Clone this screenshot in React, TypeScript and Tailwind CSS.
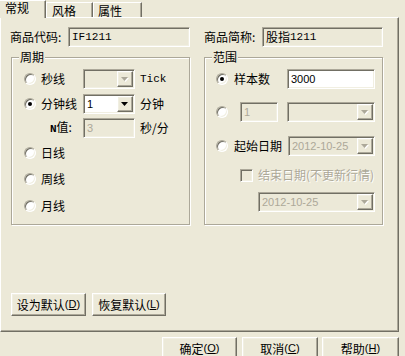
import React from "react";

const sunken =
  "border border-t-[#ACA899] border-l-[#ACA899] border-r-white border-b-white shadow-[inset_1px_1px_0_#716F64,inset_-1px_-1px_0_#F1EFE2]";
const raised =
  "border border-t-white border-l-white border-r-[#716F64] border-b-[#716F64] shadow-[inset_-1px_-1px_0_#ACA899,inset_1px_1px_0_#F1EFE2]";
const mono = "font-['Liberation_Mono',monospace] text-[11px]";
const sans = "font-['Liberation_Sans',sans-serif] text-[11px]";
const grayText = "text-[#ACA899]";
const emboss = "text-[#ACA899] [text-shadow:1px_1px_0_#fff]";

function Arrow({ disabled }: { disabled?: boolean }) {
  return (
    <svg width="8" height="5" viewBox="0 0 8 5" className="overflow-visible">
      {disabled && <polygon points="1,1 8,1 4.5,5" fill="#fff" />}
      <polygon points="0,0 7,0 3.5,4" fill={disabled ? "#ACA899" : "#000"} />
    </svg>
  );
}

function Combo({
  className,
  value,
  disabled,
}: {
  className: string;
  value?: string;
  disabled?: boolean;
}) {
  return (
    <div
      className={`flex h-[20px] p-[1px] ${sunken} ${disabled ? "bg-[#ECE9D8]" : "bg-white"} ${className}`}
    >
      <div
        className={`flex-1 flex items-center pl-[2px] ${sans} ${disabled ? grayText : "text-black"}`}
      >
        {value}
      </div>
      <div
        className={`w-[16px] h-full bg-[#ECE9D8] flex items-center justify-center ${raised}`}
      >
        <Arrow disabled={disabled} />
      </div>
    </div>
  );
}

function TextBox({
  className,
  children,
  disabled,
  white,
}: {
  className: string;
  children?: React.ReactNode;
  disabled?: boolean;
  white?: boolean;
}) {
  return (
    <div
      className={`h-[20px] flex items-center pl-[3px] ${sunken} ${white ? "bg-white" : "bg-[#ECE9D8]"} ${disabled ? grayText : "text-black"} ${className}`}
    >
      {children}
    </div>
  );
}

function Radio({ checked }: { checked?: boolean }) {
  return (
    <div className="w-[12px] h-[12px] shrink-0 rounded-full bg-white border border-t-[#ACA899] border-l-[#ACA899] border-r-white border-b-white shadow-[inset_1px_1px_0_#716F64,inset_-1px_-1px_0_#F1EFE2] flex items-center justify-center">
      {checked && <div className="w-[4px] h-[4px] rounded-full bg-black" />}
    </div>
  );
}

function Button({
  className,
  children,
}: {
  className: string;
  children: React.ReactNode;
}) {
  return (
    <div
      className={`h-[23px] flex items-center justify-center bg-[#ECE9D8] ${raised} ${className}`}
    >
      {children}
    </div>
  );
}

function Mn({ c }: { c: string }) {
  return (
    <span className="font-['Liberation_Sans',sans-serif] text-[11px]">
      (<span className="underline">{c}</span>)
    </span>
  );
}

function Group({
  className,
  title,
  children,
}: {
  className: string;
  title: string;
  children: React.ReactNode;
}) {
  return (
    <div
      className={`relative w-[179px] h-[168px] border border-[#ACA899] shadow-[1px_1px_0_#fff,inset_1px_1px_0_#fff] flex flex-col ${className}`}
    >
      <div className="absolute -top-[7px] left-[7px] bg-[#ECE9D8] px-[1px]">
        {title}
      </div>
      {children}
    </div>
  );
}

export default function App() {
  return (
    <div className="w-[405px] h-[356px] bg-[#ECE9D8] overflow-hidden text-[12px] leading-none text-black font-['Noto_Sans_CJK_SC',sans-serif]">
      {/* tabs */}
      <div className="flex h-[17px] items-end">
        <div className="relative z-10 -mb-[1px] h-[18px] w-[46px] bg-[#ECE9D8] border-t border-t-white border-r border-r-[#716F64] shadow-[inset_-1px_0_0_#ACA899] pl-[5px] pt-[1px]">
          常规
        </div>
        <div className="h-[15px] w-[47px] border-t border-l border-t-white border-l-white border-r border-r-[#716F64] shadow-[inset_-1px_0_0_#ACA899] pl-[5px] pt-[2px]">
          风格
        </div>
        <div className="h-[15px] w-[49px] border-t border-l border-t-white border-l-white border-r border-r-[#716F64] shadow-[inset_-1px_0_0_#ACA899] pl-[4px] pt-[2px]">
          属性
        </div>
      </div>

      {/* panel */}
      <div className="w-[399px] h-[315px] border-t border-l border-t-white border-l-white border-r border-b border-r-[#716F64] border-b-[#716F64] shadow-[inset_-1px_-1px_0_#ACA899] flex flex-col">
        {/* code / name row */}
        <div className="mt-[9px] flex items-center h-[20px]">
          <div className="ml-[9px] w-[58px]">商品代码:</div>
          <TextBox className="w-[122px]">
            <span className={mono}>IF1211</span>
          </TextBox>
          <div className="ml-[14px] w-[58px]">商品简称:</div>
          <TextBox className="w-[121px]">
            股指<span className={mono}>1211</span>
          </TextBox>
        </div>

        {/* groups */}
        <div className="mt-[10px] flex">
          <Group className="ml-[10px]" title="周期">
            <div className="mt-[11px] h-[20px] flex items-center">
              <div className="ml-[12px]">
                <Radio />
              </div>
              <div className="ml-[5px] w-[42px]">秒线</div>
              <Combo className="w-[52px]" disabled />
              <div className={`ml-[5px] ${mono}`}>Tick</div>
            </div>
            <div className="mt-[5px] h-[20px] flex items-center">
              <div className="ml-[12px]">
                <Radio checked />
              </div>
              <div className="ml-[5px] w-[42px]">分钟线</div>
              <Combo className="w-[52px]" value="1" />
              <div className="ml-[5px]">分钟</div>
            </div>
            <div className="mt-[4px] h-[20px] flex items-center">
              <div className="ml-[38px] w-[33px]">
                <span className={`${mono} font-bold`}>N</span>值:
              </div>
              <TextBox className={`w-[52px] ${sans}`} disabled>
                3
              </TextBox>
              <div className="ml-[5px]">秒/分</div>
            </div>
            <div className="mt-[5px] h-[20px] flex items-center">
              <div className="ml-[12px]">
                <Radio />
              </div>
              <div className="ml-[5px]">日线</div>
            </div>
            <div className="mt-[6px] h-[20px] flex items-center">
              <div className="ml-[12px]">
                <Radio />
              </div>
              <div className="ml-[5px]">周线</div>
            </div>
            <div className="mt-[7px] h-[20px] flex items-center">
              <div className="ml-[12px]">
                <Radio />
              </div>
              <div className="ml-[5px]">月线</div>
            </div>
          </Group>

          <Group className="ml-[14px]" title="范围">
            <div className="mt-[11px] h-[20px] flex items-center">
              <div className="ml-[11px]">
                <Radio checked />
              </div>
              <div className="ml-[6px] w-[53px]">样本数</div>
              <TextBox className={`w-[88px] ${sans}`} white>
                3000
              </TextBox>
            </div>
            <div className="mt-[13px] h-[20px] flex items-center">
              <div className="ml-[11px]">
                <Radio />
              </div>
              <TextBox className={`ml-[12px] w-[38px] ${sans}`} disabled>
                1
              </TextBox>
              <Combo className="ml-[9px] w-[88px]" disabled />
            </div>
            <div className="mt-[14px] h-[20px] flex items-center">
              <div className="ml-[11px]">
                <Radio />
              </div>
              <div className="ml-[6px] w-[54px]">起始日期</div>
              <Combo className="w-[87px]" value="2012-10-25" disabled />
            </div>
            <div className="mt-[12px] h-[14px] flex items-center">
              <div
                className={`ml-[35px] w-[13px] h-[13px] bg-[#ECE9D8] ${sunken}`}
              />
              <div className={`ml-[5px] ${emboss}`}>结束日期(不更新行情)</div>
            </div>
            <div className="mt-[10px] flex">
              <Combo className="ml-[53px] w-[117px]" value="2012-10-25" disabled />
            </div>
          </Group>
        </div>

        {/* default buttons */}
        <div className="mt-[68px] flex">
          <Button className="ml-[10px] w-[75px]">
            设为默认 <Mn c="D" />
          </Button>
          <Button className="ml-[6px] w-[74px]">
            恢复默认 <Mn c="L" />
          </Button>
        </div>
      </div>

      {/* bottom buttons */}
      <div className="mt-[5px] flex">
        <Button className="ml-[162px] w-[75px]">
          确定 <Mn c="O" />
        </Button>
        <Button className="ml-[5px] w-[76px]">
          取消 <Mn c="C" />
        </Button>
        <Button className="ml-[4px] w-[77px]">
          帮助 <Mn c="H" />
        </Button>
      </div>
    </div>
  );
}
